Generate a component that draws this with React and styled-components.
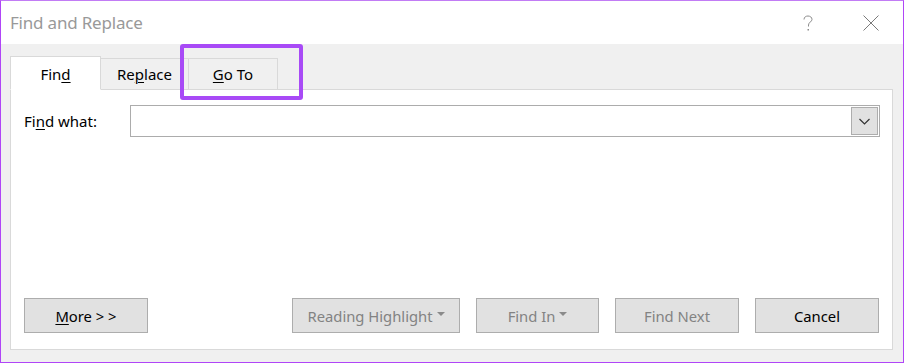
import * as React from "react";
import styled, { createGlobalStyle } from "styled-components";

const GlobalStyle = createGlobalStyle`
  html, body {
    margin: 0;
    padding: 0;
    background: #ffffff;
  }
  body {
    font-family: "Segoe UI", "Noto Sans", "Open Sans", sans-serif;
  }
`;

const Window = styled.div`
  width: 904px;
  height: 363px;
  box-sizing: border-box;
  border: 1px solid #b045f7;
  border-top-color: #c27cf5;
  display: flex;
  flex-direction: column;
  background: #f0f0f0;
`;

const TitleBar = styled.div`
  height: 43px;
  flex: none;
  background: #ffffff;
  display: flex;
  align-items: center;
  padding: 0 24px 0 9px;
`;

const Title = styled.h1`
  margin: 0;
  font-size: 17px;
  font-weight: 400;
  color: #999999;
  letter-spacing: -0.2px;
  flex: 1;
`;

const TitleButton = styled.span`
  width: 16px;
  height: 16px;
  display: flex;
  align-items: center;
  justify-content: center;
  margin-left: ${(p) => p.$gap || 0}px;
`;

const Body = styled.div`
  flex: 1;
  display: flex;
  flex-direction: column;
  padding: 11px 10px 12px 9px;
`;

const TabRow = styled.div`
  display: flex;
  align-items: flex-end;
  height: 34px;
  flex: none;
`;

const Tab = styled.div`
  position: relative;
  box-sizing: border-box;
  width: ${(p) => p.$width}px;
  height: ${(p) => (p.$active ? 34 : 32)}px;
  margin-bottom: -1px;
  margin-left: ${(p) => (p.$first ? 0 : -1)}px;
  border: 1px solid #d9d9d9;
  border-bottom-color: ${(p) => (p.$active ? "#ffffff" : "#d9d9d9")};
  background: ${(p) => (p.$active ? "#ffffff" : "#f0f0f0")};
  z-index: ${(p) => (p.$active ? 2 : 1)};
  display: flex;
  align-items: center;
  justify-content: center;
  padding-top: ${(p) => (p.$active ? 2 : 0)}px;
  font-size: 15px;
  color: #000000;
`;

const Highlight = styled.div`
  position: absolute;
  left: -9px;
  right: -26px;
  top: -15px;
  bottom: -11px;
  border: 4px solid #a84af6;
  border-radius: 3px;
  pointer-events: none;
`;

const Key = styled.span`
  text-decoration: underline;
  text-underline-offset: 2px;
  text-decoration-thickness: 1px;
`;

const Panel = styled.div`
  flex: 1;
  background: #ffffff;
  border: 1px solid #d9d9d9;
  display: flex;
  flex-direction: column;
  padding: 15px 13px 16px 13px;
`;

const FieldRow = styled.div`
  display: flex;
  align-items: center;
  margin-right: -1px;
`;

const Label = styled.label`
  width: 106px;
  font-size: 15px;
  color: #000000;
`;

const Combo = styled.div`
  flex: 1;
  height: 32px;
  box-sizing: border-box;
  border: 1px solid #acacac;
  display: flex;
  justify-content: flex-end;
  padding: 1px;
`;

const ComboButton = styled.div`
  width: 27px;
  box-sizing: border-box;
  border: 1px solid #adadad;
  background: #e1e1e1;
  display: flex;
  align-items: center;
  justify-content: center;
`;

const ButtonRow = styled.div`
  margin-top: auto;
  display: flex;
  align-items: center;
`;

const Group = styled.div`
  margin-left: auto;
  display: flex;
  gap: 16px;
`;

const Button = styled.div`
  box-sizing: border-box;
  width: ${(p) => p.$width}px;
  height: 35px;
  border: 1px solid #adadad;
  background: #e1e1e1;
  display: flex;
  align-items: center;
  justify-content: center;
  gap: 4px;
  font-size: 14.8px;
  color: ${(p) => (p.$disabled ? "#838383" : "#000000")};
`;

const Caret = styled.span`
  width: 0;
  height: 0;
  border-left: 4px solid transparent;
  border-right: 4px solid transparent;
  border-top: 4px solid #8a8a8a;
  margin-top: -4px;
`;

const HelpIcon = () => (
  <svg width="12" height="16" viewBox="0 0 12 16" fill="none" stroke="#8c8c8c" strokeWidth="1">
    <path d="M2 4.5 C2 2 4 1 6 1 C8.2 1 10 2.4 10 4.4 C10 6.6 6.5 7.4 6.5 10 L6.5 11.5" />
    <rect x="5.5" y="14" width="1.5" height="1.5" fill="#8c8c8c" stroke="none" />
  </svg>
);

const CloseIcon = () => (
  <svg width="16" height="16" viewBox="0 0 16 16" fill="none" stroke="#7a7a7a" strokeWidth="1">
    <path d="M0.5 0.5 L15.5 15.5 M15.5 0.5 L0.5 15.5" />
  </svg>
);

const Chevron = () => (
  <svg width="11" height="7" viewBox="0 0 11 7" fill="none" stroke="#333333" strokeWidth="1.2">
    <path d="M0.5 1 L5.5 6 L10.5 1" />
  </svg>
);

const App = () => {
  return (
    <>
      <GlobalStyle />
      <Window>
        <TitleBar>
          <Title>Find and Replace</Title>
          <TitleButton>
            <HelpIcon />
          </TitleButton>
          <TitleButton $gap={47}>
            <CloseIcon />
          </TitleButton>
        </TitleBar>
        <Body>
          <TabRow>
            <Tab $active $first $width={91}>
              <span>
                Fin<Key>d</Key>
              </span>
            </Tab>
            <Tab $width={89}>
              <span>
                Re<Key>p</Key>lace
              </span>
            </Tab>
            <Tab $width={90}>
              <span>
                <Key>G</Key>o To
              </span>
              <Highlight />
            </Tab>
          </TabRow>
          <Panel>
            <FieldRow>
              <Label>
                Fi<Key>n</Key>d what:
              </Label>
              <Combo>
                <ComboButton>
                  <Chevron />
                </ComboButton>
              </Combo>
            </FieldRow>
            <ButtonRow>
              <Button $width={124}>
                <span>
                  <Key>M</Key>ore &gt; &gt;
                </span>
              </Button>
              <Group>
                <Button $disabled $width={168}>
                  Reading Highlight
                  <Caret />
                </Button>
                <Button $disabled $width={123}>
                  Find In
                  <Caret />
                </Button>
                <Button $disabled $width={124}>
                  Find Next
                </Button>
                <Button $width={124}>Cancel</Button>
              </Group>
            </ButtonRow>
          </Panel>
        </Body>
      </Window>
    </>
  );
};

export default App;
